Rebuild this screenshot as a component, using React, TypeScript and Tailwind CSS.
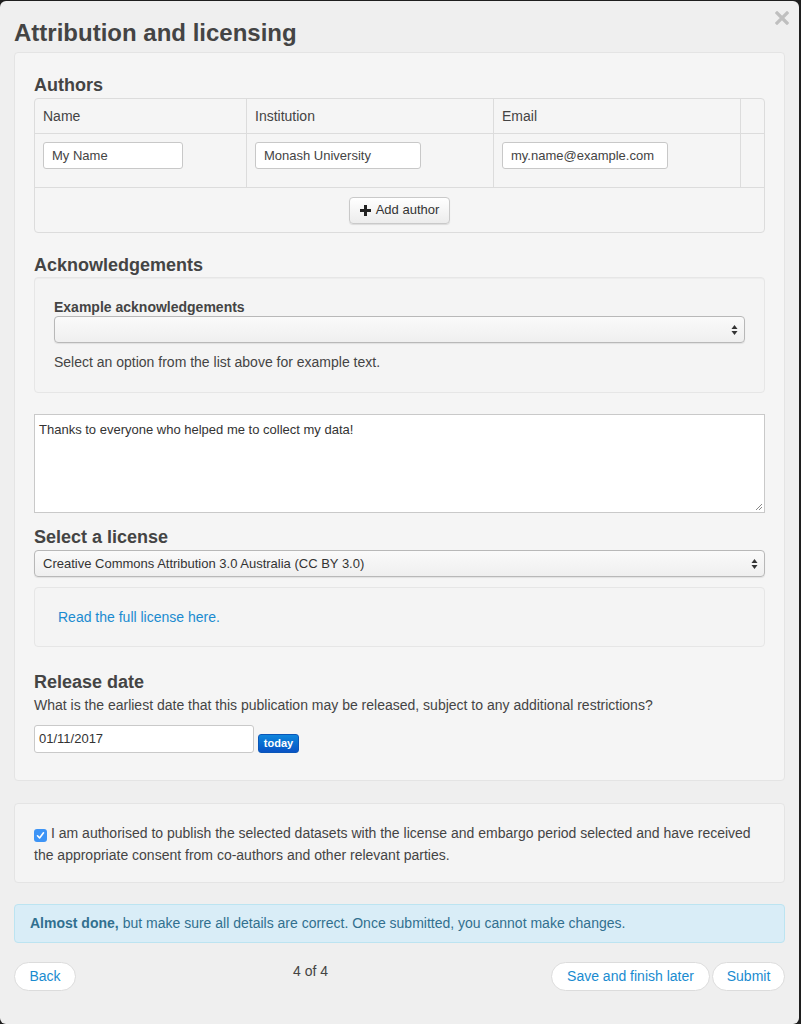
import React from "react";

const font = { fontFamily: '"Liberation Sans", Arial, sans-serif' };

function SelectArrows() {
  return (
    <svg width="7" height="12" viewBox="0 0 7 12" className="shrink-0">
      <path d="M3.5 1 L6.5 5 L0.5 5 Z" fill="#333" />
      <path d="M3.5 11 L6.5 7 L0.5 7 Z" fill="#333" />
    </svg>
  );
}

function FakeSelect({ value, className = "" }: { value?: string; className?: string }) {
  return (
    <div
      className={`flex h-[27px] items-center justify-between rounded-[4px] border border-[#b8b8b8] bg-gradient-to-b from-[#fafafa] to-[#efefef] pl-[8px] pr-[6px] text-[13px] text-[#333] shadow-[0_1px_1px_rgba(0,0,0,0.08)] ${className}`}
    >
      <span>{value ?? ""}</span>
      <SelectArrows />
    </div>
  );
}

function TextInput({ value, w }: { value: string; w: string }) {
  return (
    <div
      className={`flex h-[27px] items-center rounded-[3px] border border-[#c8c8c8] bg-white pl-[8px] text-[13px] text-[#444] ${w}`}
    >
      {value}
    </div>
  );
}

function PillButton({ children, className = "" }: { children: React.ReactNode; className?: string }) {
  return (
    <button
      className={`flex h-[29px] items-center justify-center rounded-full border border-[#dcdcdc] bg-white px-[14px] text-[14px] text-[#1a8bd0] ${className}`}
    >
      {children}
    </button>
  );
}

export default function App() {
  return (
    <div className="h-[1024px] w-[801px] overflow-hidden bg-[#1e1e1e]" style={font}>
      <div className="relative mt-px h-[1023px] w-[799px] rounded-[6px] bg-[#efefef] px-[14px] text-[#444]">
        {/* close button */}
        <svg className="absolute right-[10px] top-[10px]" width="14" height="14" viewBox="0 0 14 14">
          <path d="M2 2 L12 12 M12 2 L2 12" stroke="#bfbfbf" strokeWidth="3.2" strokeLinecap="square" />
        </svg>

        <h1 className="pt-[19px] text-[24px] font-bold leading-[26px] text-[#444]">Attribution and licensing</h1>

        {/* main form well */}
        <div className="mt-[6px] rounded-[4px] border border-[#e4e4e4] bg-[#f5f5f5] px-[19px] pb-[27px] pt-[22px]">
          <h3 className="text-[18px] font-bold leading-[20px]">Authors</h3>

          <div className="mt-[3px] overflow-hidden rounded-[4px] border border-[#dcdcdc] text-[14px]">
            <div className="grid h-[35px] grid-cols-[212px_247px_247px_1fr] border-b border-[#dcdcdc]">
              <div className="flex items-center border-r border-[#dcdcdc] pl-[8px]">Name</div>
              <div className="flex items-center border-r border-[#dcdcdc] pl-[8px]">Institution</div>
              <div className="flex items-center border-r border-[#dcdcdc] pl-[8px]">Email</div>
              <div />
            </div>
            <div className="grid h-[54px] grid-cols-[212px_247px_247px_1fr] border-b border-[#dcdcdc]">
              <div className="border-r border-[#dcdcdc] pl-[8px] pt-[8px]">
                <TextInput value="My Name" w="w-[140px]" />
              </div>
              <div className="border-r border-[#dcdcdc] pl-[8px] pt-[8px]">
                <TextInput value="Monash University" w="w-[166px]" />
              </div>
              <div className="border-r border-[#dcdcdc] pl-[8px] pt-[8px]">
                <TextInput value="my.name@example.com" w="w-[166px]" />
              </div>
              <div />
            </div>
            <div className="flex h-[44px] items-center justify-center">
              <button className="flex h-[27px] items-center gap-[5px] rounded-[4px] border border-[#c9c9c9] bg-gradient-to-b from-white to-[#ececec] px-[10px] text-[13px] text-[#333] shadow-[0_1px_1px_rgba(0,0,0,0.1)]">
                <svg width="11" height="11" viewBox="0 0 11 11">
                  <path d="M4 0h3v4h4v3H7v4H4V7H0V4h4z" fill="#222" />
                </svg>
                Add author
              </button>
            </div>
          </div>

          <h3 className="mt-[22px] text-[18px] font-bold leading-[20px]">Acknowledgements</h3>
          <div className="mt-[2px] rounded-[4px] border border-[#e6e6e6] bg-[#f4f4f4] px-[19px] pb-[21px] pt-[21px] shadow-[inset_0_1px_1px_rgba(0,0,0,0.03)]">
            <div className="text-[14px] font-bold leading-[17px]">Example acknowledgements</div>
            <FakeSelect />
            <p className="mt-[11px] text-[14px] leading-[17px]">Select an option from the list above for example text.</p>
          </div>

          <div className="relative mt-[21px] h-[99px] border border-[#c9c9c9] bg-white px-[4px] pt-[5px] text-[13px] text-[#333]">
            Thanks to everyone who helped me to collect my data!
            <svg className="absolute bottom-[1px] right-[1px]" width="8" height="8" viewBox="0 0 8 8">
              <path d="M7 1 L1 7 M7 4 L4 7" stroke="#888" strokeWidth="1" />
            </svg>
          </div>

          <h3 className="mt-[14px] text-[18px] font-bold leading-[20px]">Select a license</h3>
          <FakeSelect className="mt-[3px]" value="Creative Commons Attribution 3.0 Australia (CC BY 3.0)" />

          <div className="mt-[10px] flex h-[60px] items-center rounded-[4px] border border-[#e6e6e6] bg-[#f4f4f4] px-[23px]">
            <a className="text-[14px] text-[#1a8bd0]">Read the full license here.</a>
          </div>

          <h3 className="mt-[25px] text-[18px] font-bold leading-[20px]">Release date</h3>
          <p className="mt-[5px] text-[14px] leading-[17px]">
            What is the earliest date that this publication may be released, subject to any additional restrictions?
          </p>
          <div className="mt-[11px] flex items-end gap-[4px]">
            <div className="flex h-[28px] w-[220px] items-center rounded-[3px] border border-[#c9c9c9] bg-white pl-[4px] text-[13px] text-[#333]">
              01/11/2017
            </div>
            <button className="flex h-[19px] w-[41px] items-center justify-center rounded-[3px] border border-[#0a56b8] bg-gradient-to-b from-[#1186dc] to-[#0a52c4] text-[11px] font-bold text-white">
              today
            </button>
          </div>
        </div>

        {/* consent well */}
        <div className="mt-[22px] rounded-[4px] border border-[#e4e4e4] bg-[#f4f4f4] px-[19px] pb-[16px] pt-[18px] text-[14px] leading-[22px]">
          <span className="mr-[4px] inline-flex h-[13px] w-[13px] translate-y-[1px] items-center justify-center rounded-[3px] bg-[#3d94f6] align-[-1px]">
            <svg width="9" height="9" viewBox="0 0 9 9">
              <path d="M1.5 4.8 L3.6 7 L7.5 1.8" stroke="white" strokeWidth="1.6" fill="none" strokeLinecap="round" strokeLinejoin="round" />
            </svg>
          </span>
          I am authorised to publish the selected datasets with the license and embargo period selected and have received the
          appropriate consent from co-authors and other relevant parties.
        </div>

        {/* info alert */}
        <div className="mt-[21px] flex h-[39px] items-center rounded-[4px] border border-[#bce4f1] bg-[#d9edf7] px-[15px] text-[14px] text-[#31708f]">
          <b className="mr-[4px]">Almost done,</b> but make sure all details are correct. Once submitted, you cannot make changes.
        </div>

        {/* footer */}
        <div className="mt-[19px] flex items-start">
          <PillButton className="w-[62px] px-0">Back</PillButton>
          <div className="ml-[217px] pt-[1px] text-[14px] leading-[17px] text-[#444]">4 of 4</div>
          <div className="ml-auto flex gap-[2px]">
            <PillButton className="w-[159px]">Save and finish later</PillButton>
            <PillButton className="w-[73px]">Submit</PillButton>
          </div>
        </div>
      </div>
    </div>
  );
}
